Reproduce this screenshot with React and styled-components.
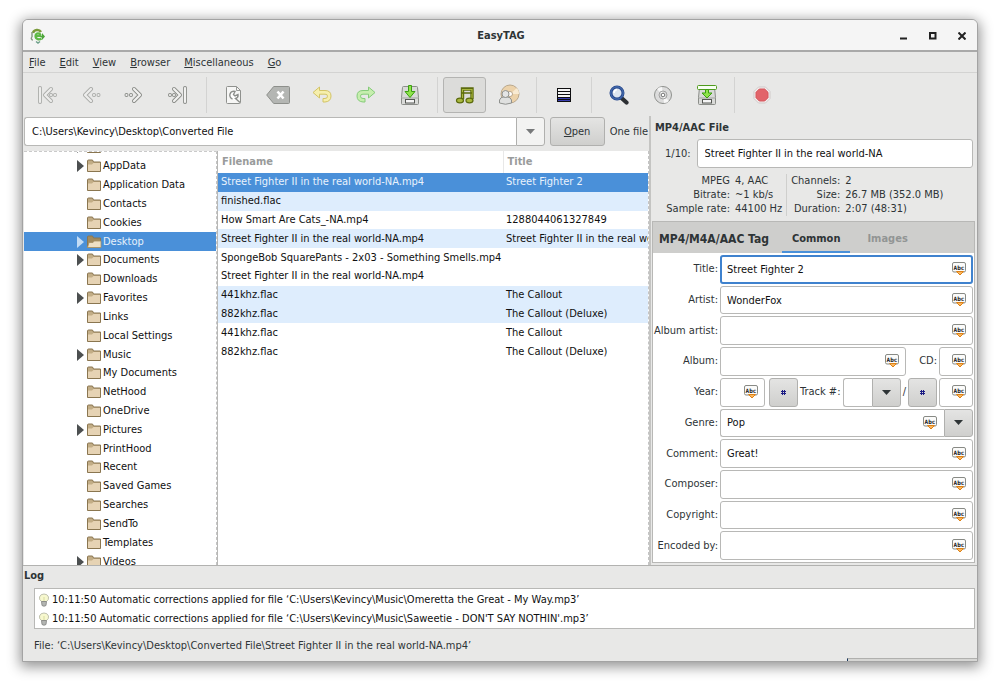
import React, { useState } from "react";
import styled, { createGlobalStyle, css } from "styled-components";

const GlobalStyle = createGlobalStyle`
  * {
    box-sizing: border-box;
  }
  body {
    margin: 0;
    background: #fff;
  }
  body, button, input {
    font-family: "DejaVu Sans Condensed", "DejaVu Sans", sans-serif;
    font-size: 11px;
    line-height: 14px;
    color: #2e3436;
  }
  button {
    padding: 0;
    border: 0;
    background: none;
  }
`;

const Desktop = styled.div`
  display: flex;
  height: 100vh;
  min-height: 640px;
  padding: 19px 22px 24px;
`;

const Window = styled.main`
  flex: 1;
  min-width: 0;
  display: flex;
  flex-direction: column;
  background: #e8e8e7;
  border: 1px solid #a3a3a3;
  border-radius: 6px 6px 0 0;
  box-shadow: 0 3px 13px 2px rgba(0, 0, 0, 0.42);
  overflow: hidden;
`;

const TitleBar = styled.header`
  flex: 0 0 32px;
  display: grid;
  grid-template-columns: 1fr auto 1fr;
  align-items: center;
  padding: 2px 5px 0 7px;
  background: #f5f5f5;
  border-bottom: 2px solid #a9a9a9;
`;

const Title = styled.h1`
  margin: 0;
  font-size: 11px;
  font-weight: bold;
`;

const WindowButtons = styled.div`
  display: flex;
  justify-content: flex-end;
  gap: 9px;
`;

const WindowButton = styled.button`
  display: flex;
  align-items: center;
  justify-content: center;
  width: 20px;
  height: 20px;
`;

const MenuBar = styled.nav`
  flex: 0 0 21px;
  display: flex;
  align-items: center;
  gap: 14px;
  padding: 1px 6px 0;
  border-bottom: 1px solid #d3d3d2;
`;

const ToolBar = styled.div`
  flex: 0 0 43px;
  display: flex;
  align-items: center;
  padding: 0 3px;
`;

const ToolGroup = styled.div`
  display: flex;
  gap: ${({ $gap }) => $gap || 1}px;
  padding: 0 6px 0 5px;
  border-right: 1px solid #d3d3d2;

  &:first-child {
    padding: 0 8px 0 0;
  }
  &:last-child {
    border-right: 0;
  }
`;

const ToolButton = styled.button`
  display: flex;
  align-items: center;
  justify-content: center;
  width: 43px;
  height: 36px;
  border: 1px solid transparent;
  border-radius: 3px;
  ${({ $pressed }) =>
    $pressed &&
    css`
      background: #dcdcda;
      border-color: #b4b4b2;
    `}
`;

const Body = styled.div`
  flex: 1;
  min-height: 0;
  display: flex;
  border-bottom: 1px solid #b2b2b0;
`;

const LeftSide = styled.div`
  flex: 1;
  min-width: 0;
  display: flex;
  flex-direction: column;
  padding-left: 1px;
`;

const AddressRow = styled.div`
  flex: none;
  display: flex;
  align-items: center;
  gap: 5px;
  padding: 1px 1px 5px 0;
  white-space: nowrap;
`;

const Combo = styled.div`
  display: flex;
  min-width: 0;
  min-height: 0;
  height: ${({ $fill }) => ($fill ? "100%" : "auto")};
  flex: ${({ $width }) => ($width ? `0 0 ${$width}px` : 1)};
`;

const Entry = styled.input`
  flex: 1;
  width: 100%;
  min-width: 0;
  height: ${({ $tall }) => ($tall ? "29px" : "100%")};
  padding: 0 ${({ $tall }) => ($tall ? 7 : 6)}px;
  color: #101010;
  background: #fff;
  border: 1px solid #b8b8b6;
  border-radius: 3px;
  outline: none;
  ${({ $joined }) =>
    $joined &&
    css`
      border-right: 0;
      border-radius: 3px 0 0 3px;
    `}
  ${({ $focused }) =>
    $focused &&
    css`
      border: 2px solid #3f82ce;
      padding: 0 5px;
    `}
`;

const PushButton = styled.button`
  display: flex;
  align-items: center;
  justify-content: center;
  flex: 0 0 ${({ $width }) => $width || 29}px;
  height: ${({ $tall }) => ($tall ? "29px" : "100%")};
  background: ${({ $flat }) => ($flat ? "#f3f3f2" : "linear-gradient(#e4e4e3, #cfcfcd)")};
  border: 1px solid #b0b0ae;
  border-radius: ${({ $joined }) => ($joined ? "0 3px 3px 0" : "3px")};
`;

const Panes = styled.div`
  flex: 1;
  min-height: 0;
  display: flex;
`;

const TreePane = styled.div`
  flex: 0 0 193px;
  display: flex;
  flex-direction: column;
  background: #fff;
  border-top: 1px dashed #cacaca;
  border-right: 1px dashed #c4c4c4;
  overflow: hidden;
`;

const Tree = styled.ul`
  flex: 1;
  display: flex;
  flex-direction: column;
  list-style: none;
  margin: -14px 0 -6px;
  padding: 0;
`;

const TreeItem = styled.li`
  flex: 1;
  min-height: 0;
  display: flex;
  align-items: center;
  gap: 1px;
  padding-left: 51px;
  white-space: nowrap;
  color: ${({ $selected }) => ($selected ? "#e6f0fb" : "#101010")};
  background: ${({ $selected }) => ($selected ? "#4a90d9" : "none")};

  svg {
    flex: none;
  }
`;

const FilePane = styled.div`
  flex: 1;
  min-width: 0;
  background: #fff;
  border-left: 1px solid #b8b8b6;
  border-right: 1px dashed #c4c4c4;
  overflow: hidden;
`;

const FileTable = styled.table`
  width: 100%;
  height: 210px;
  table-layout: fixed;
  border-collapse: collapse;
  color: #101010;
`;

const HeadCell = styled.th`
  height: 22px;
  padding: 0 4px;
  text-align: left;
  color: #999b9b;
  width: ${({ $width }) => ($width ? $width + "px" : "auto")};

  & + & {
    border-left: 1px solid #e8e8e8;
  }
`;

const FileRow = styled.tr`
  background: ${({ $tint }) => ($tint ? "#deedfd" : "#fff")};
  ${({ $selected }) =>
    $selected &&
    css`
      background: #4a90d9;
      color: #e9f2fc;
    `}
`;

const Cell = styled.td`
  height: 18px;
  padding: 0 3px;
  white-space: nowrap;
  overflow: hidden;
`;

const RightSide = styled.div`
  flex: 0 0 328px;
  display: flex;
  flex-direction: column;
  border-left: 2px solid #c4c4c2;
  padding: 0 2px 2px 1px;
`;

const Heading = styled.h2`
  margin: 0;
  padding: 5px 3px 4px;
  font-size: 11px;
  line-height: 14px;
  font-weight: bold;
`;

const NameRow = styled.div`
  display: flex;
  align-items: center;
  gap: 6px;
  padding: 0 2px 0 13px;
  label {
    flex: none;
  }
`;

const Facts = styled.div`
  display: flex;
  padding: 6px 0 5px;
`;

const FactList = styled.dl`
  display: grid;
  grid-template-columns: ${({ $keys }) => $keys}px auto;
  column-gap: 5px;
  margin: 0;
  white-space: nowrap;

  dt {
    text-align: right;
  }
  dd {
    margin: 0;
  }
  & + & {
    margin-left: 4px;
    border-left: 1px solid #cfcfcd;
  }
`;

const TagBox = styled.section`
  flex: 1;
  min-height: 0;
  display: flex;
  flex-direction: column;
  background: #fff;
  border: 1px solid #b8b8b6;
`;

const TabBar = styled.div`
  flex: 0 0 31px;
  display: flex;
  align-items: stretch;
  background: #cececc;
  font-weight: bold;
`;

const TabLabel = styled.span`
  display: flex;
  align-items: center;
  flex: none;
  padding: 2px 13px 0 6px;
  font-size: 12px;
`;

const Tab = styled.button`
  padding: 0 10px;
  margin-right: 7px;
  font-weight: bold;
  color: ${({ $active }) => ($active ? "#2e3436" : "#929594")};
  border-top: 4px solid transparent;
  border-bottom: 2px solid ${({ $active }) => ($active ? "#4a90d9" : "transparent")};
`;

const Form = styled.form`
  flex: 1;
  min-height: 0;
  display: grid;
  grid-template-columns: auto 1fr;
  grid-auto-rows: 1fr;
  gap: 2px;
  padding: 2px 1px;
`;

const FieldLabel = styled.label`
  display: flex;
  align-items: center;
  justify-content: flex-end;
  padding-left: ${({ $indent }) => $indent || 0}px;
  white-space: nowrap;
`;

const FieldRow = styled.div`
  display: flex;
  align-items: center;
  gap: 2px;
  min-width: 0;
  min-height: 0;
`;

const TagField = styled.div`
  position: relative;
  display: flex;
  height: 100%;
  min-width: 0;
  flex: ${({ $width }) => ($width ? `0 0 ${$width}px` : 1)};
`;

const YearBox = styled.div`
  display: flex;
  gap: 4px;
  height: 100%;
`;

const FillButton = styled.button`
  position: absolute;
  right: 6px;
  top: 0;
  bottom: 0;
  display: flex;
  align-items: center;
`;

const Log = styled.section`
  flex: none;
  padding: 3px 2px 0 1px;
`;

const LogTitle = styled.h2`
  margin: 0;
  font-size: 11px;
  line-height: 14px;
  font-weight: bold;
`;

const LogLines = styled.ul`
  list-style: none;
  margin: 5px 0 0 10px;
  padding: 1px 3px 0;
  color: #101010;
  background: #fff;
  border: 1px solid #b8b8b6;
`;

const LogLine = styled.li`
  display: flex;
  align-items: center;
  gap: 2px;
  height: 19px;
`;

const Footer = styled.footer`
  flex: 0 0 32px;
  display: flex;
  flex-direction: column;
  justify-content: space-between;
  padding-top: 10px;
`;

const Status = styled.div`
  padding-left: 11px;
`;

const Progress = styled.div`
  align-self: flex-end;
  width: 130px;
  height: 3px;
  background: #d6d6d4;
  border-top: 1px solid #b0b0ae;
  border-left: 1px solid #17365c;
`;

const nodes = [
  ["", true],
  ["AppData", true],
  ["Application Data"],
  ["Contacts"],
  ["Cookies"],
  ["Desktop", true],
  ["Documents", true],
  ["Downloads"],
  ["Favorites", true],
  ["Links"],
  ["Local Settings"],
  ["Music", true],
  ["My Documents"],
  ["NetHood"],
  ["OneDrive"],
  ["Pictures", true],
  ["PrintHood"],
  ["Recent"],
  ["Saved Games"],
  ["Searches"],
  ["SendTo"],
  ["Templates"],
  ["Videos", true],
];

const files = [
  { name: "Street Fighter II in the real world-NA.mp4", title: "Street Fighter 2", selected: true },
  { name: "finished.flac", title: "", tint: true },
  { name: "How Smart Are Cats_-NA.mp4", title: "1288044061327849" },
  { name: "Street Fighter II in the real world-NA.mp4", title: "Street Fighter II in the real world-NA", tint: true },
  { name: "SpongeBob SquarePants - 2x03 - Something Smells.mp4", title: "" },
  { name: "Street Fighter II in the real world-NA.mp4", title: "" },
  { name: "441khz.flac", title: "The Callout", tint: true },
  { name: "882khz.flac", title: "The Callout (Deluxe)", tint: true },
  { name: "441khz.flac", title: "The Callout" },
  { name: "882khz.flac", title: "The Callout (Deluxe)" },
];

const logLines = [
  "10:11:50 Automatic corrections applied for file ‘C:\\Users\\Kevincy\\Music\\Omeretta the Great - My Way.mp3’",
  "10:11:50 Automatic corrections applied for file ‘C:\\Users\\Kevincy\\Music\\Saweetie - DON'T SAY NOTHIN'.mp3’",
];

/* icons */

function Svg({ w = 22, h = w, children }) {
  return (
    <svg width={w} height={h} viewBox={`0 0 ${w} ${h}`} fill="none" aria-hidden="true">
      {children}
    </svg>
  );
}

function AppIcon() {
  return (
    <Svg w={16}>
      <path d="M3 5C4 1.500 9 1 11 4" stroke="#7a9a3a" strokeWidth="2.600" />
      <path d="M2 4v5M2 9c-1 1-1 3 1 3" stroke="#8a9a86" strokeWidth="1.500" />
      <path d="M5.500 8h5C10.500 4.500 5.500 4.500 5.500 8c0 3.500 4 4 6 2.500" stroke="#5fb946" strokeWidth="2.200" />
      <path d="M10 8h2V5L15 8.500 12 12v-2" fill="#4da53a" />
      <path d="M6 13.500l2 1.500 2-1.500" stroke="#6fa08c" strokeWidth="1.500" />
    </Svg>
  );
}

function Nav({ flip, bar, dim }) {
  const shape = (
    <>
      {bar && <path d="M3 4v14" />}
      <path d={bar ? "M14 5l-6 6 6 6" : "M11 5l-6 6 6 6"} />
      {!bar && <path d="M14 11h.01M18.500 11h.01" />}
      {bar && <path d="M14 11h.01M18 11h.01" />}
    </>
  );
  return (
    <Svg>
      <g transform={flip ? "translate(22 0) scale(-1 1)" : undefined} strokeLinecap="round" strokeLinejoin="round" opacity={dim ? 0.65 : 1}>
        <g stroke="#8b8d89" strokeWidth="4">{shape}</g>
        <g stroke="#f1f1f0" strokeWidth="2.200">{shape}</g>
      </g>
    </Svg>
  );
}

function ScanIcon() {
  return (
    <Svg w={20}>
      <path d="M2.500 2.500q0-1 1-1h9l4 4v12q0 1-1 1h-12q-1 0-1-1z" fill="#f6f6f5" stroke="#8f918e" />
      <path d="M12.500 1.500v4h4" stroke="#999b98" />
      <path d="M8.500 14a3.800 3.800 0 1 1 2.500-7.500l-1.500 3 1.500 1.500 3-1.500q.5 3-2.500 4l4.500 4" stroke="#8c8e8b" strokeWidth="1.400" fill="#fff" />
    </Svg>
  );
}

function ClearIcon() {
  return (
    <Svg w={24} h={20}>
      <path d="M.700 10l7-8.500h14.800q1 0 1 1v15q0 1-1 1H7.700z" fill="#b4b6b3" stroke="#8d8f8b" />
      <path d="M11.500 6.500l6 7M17.500 6.500l-6 7" stroke="#fff" strokeWidth="2.600" />
    </Svg>
  );
}

function UndoIcon({ redo }) {
  return (
    <Svg w={20}>
      <path
        transform={redo ? "translate(20 0) scale(-1 1)" : undefined}
        d="M1 7.500L7.500 2v3.500H13q6 0 6 5.500t-6 6h-2v-3.500h2q2.500 0 2.500-2.300T13 9.200H7.500V13z"
        fill={redo ? "#c6eeae" : "#f6efad"}
        stroke={redo ? "#86cc7a" : "#d3c466"}
        strokeLinejoin="round"
      />
    </Svg>
  );
}

function SaveIcon({ all }) {
  return (
    <Svg w={20} h={22}>
      <path d="M2.500 3.500q0-1 1-1h13q1 0 1 1l1 10v6q0 1-1 1h-15q-1 0-1-1v-6z" fill="#d9dad8" stroke="#8b8d89" />
      <path d="M1.500 14h17" stroke="#a2a4a0" />
      <rect x="5.500" y="15.500" width="9" height="3.500" fill="#f5f5f5" stroke="#555753" />
      {all && <rect x=".5" y="1.500" width="19" height="4" rx="1" fill="#f7fff2" stroke="#4e9a1c" />}
      <path d={all ? "M8.500 5.500h3v3.500h3.500l-5 5-5-5h3.500z" : "M8.500 1.500h3v6h3.500l-5 6-5-6h3.500z"} fill="#8ee34a" stroke="#3c9e12" />
    </Svg>
  );
}

function MusicIcon() {
  return (
    <Svg w={20}>
      <path d="M7.500 14V4h9.500v10" stroke="#5c6b0e" strokeWidth="3.400" />
      <path d="M7.500 13.500V4.500h9.500v9" stroke="#a9b83e" strokeWidth="1.200" />
      <path d="M6 8h11" stroke="#5c6b0e" strokeWidth="1.500" />
      <ellipse cx="5" cy="15.500" rx="3.500" ry="2.300" fill="#a9b83e" stroke="#5c6b0e" strokeWidth="1.200" />
      <ellipse cx="14.500" cy="15.500" rx="3.500" ry="2.300" fill="#a9b83e" stroke="#5c6b0e" strokeWidth="1.200" />
    </Svg>
  );
}

function ArtistIcon() {
  return (
    <Svg>
      <circle cx="12" cy="10" r="9" fill="#ecd2aa" stroke="#b9a78c" />
      <path d="M12 10l7-6a9 9 0 0 1 2 6zM12 10l-7 3a9 9 0 0 1 0-7z" fill="#f8ead2" />
      <circle cx="12" cy="10" r="2.500" fill="#fff" stroke="#b9a58a" />
      <path d="M1.500 19v-3q1-3 4-3h4q3 0 4 3v3q-6 2.500-12 0z" fill="#dfe0df" stroke="#8f918e" />
      <circle cx="7.500" cy="10" r="3.500" fill="#e4e5e5" stroke="#8f918e" />
    </Svg>
  );
}

function ListIcon() {
  return (
    <Svg w={14} h={14}>
      <path d="M0 0h14v14H0z" fill="#0e0e10" />
      <path d="M1 2h12M1 5h12M1 8h12" stroke="#f4f4f4" strokeWidth="2" />
      <path d="M1 10.500h12M1 12.500h12" stroke="#3b3fb0" strokeWidth="1" />
    </Svg>
  );
}

function FindIcon() {
  return (
    <Svg w={20}>
      <path d="M12.500 13l5 4.500" stroke="#2d3034" strokeWidth="4.200" strokeLinecap="round" />
      <circle cx="8" cy="8" r="6" fill="#dde5ef" stroke="#26478c" strokeWidth="3" />
      <circle cx="8" cy="8" r="6.200" stroke="#4f78b8" strokeWidth="1" />
      <path d="M5 8q0-3 3-3.500" stroke="#fff" strokeWidth="1.500" />
    </Svg>
  );
}

function DiscIcon() {
  return (
    <Svg w={20}>
      <circle cx="10" cy="10" r="8.500" fill="#dcdcdc" stroke="#8e908d" />
      <path d="M10 10L4 4a8 8 0 0 1 5-2zM10 10l6 6a8 8 0 0 1-5 2z" fill="#f7f7f7" />
      <circle cx="10" cy="10" r="4" stroke="#a2a2a2" />
      <circle cx="10" cy="10" r="1.800" fill="#fff" stroke="#777" />
    </Svg>
  );
}

function StopIcon() {
  return (
    <Svg w={18}>
      <path d="M5.500 1h7L17 5.500v7L12.500 17h-7L1 12.500v-7z" fill="#f3eeee" stroke="#cfc9c9" />
      <path d="M6.300 3h5.400L15 6.300v5.400L11.700 15H6.300L3 11.700V6.300z" fill="#e2646a" stroke="#d4565c" />
    </Svg>
  );
}

function FolderIcon({ open }) {
  return (
    <Svg w={15} h={14}>
      <path d="M.500 12.500V2q0-1 1-1h4l1 2h7v9.500z" fill={open ? "#a18a5e" : "#c2ad86"} stroke="#8a7650" />
      {open ? (
        <path d="M.500 12.500l1.500-5h4l1-1.500h7v6.500z" fill="#eedfc4" stroke="#a58f66" strokeWidth=".8" />
      ) : (
        <path d="M1 12V5.500h4L6.500 4H13v8z" fill="#e6d3b4" />
      )}
    </Svg>
  );
}

function Expander({ show, light }) {
  return (
    <Svg w={11} h={12}>
      {show && <path d="M2 0l7 6-7 6z" fill={light ? "#c3dcf5" : "#4c4f50"} />}
    </Svg>
  );
}

function Caret({ color = "#2e3436" }) {
  return (
    <Svg w={9} h={5}>
      <path d="M0 0h9L4.500 5z" fill={color} />
    </Svg>
  );
}

function AbcIcon() {
  return (
    <Svg w={15} h={14}>
      <rect x=".5" y=".5" width="13" height="9.500" rx="1.500" fill="#fbfbfa" stroke="#888a85" />
      <text x="7" y="7.500" textAnchor="middle" fontSize="6" fontWeight="bold" fontFamily="DejaVu Sans Mono, monospace" fill="#16191a">Abc</text>
      <path d="M4.500 9.500h7L8 13z" fill="#fbb65e" stroke="#dd8217" />
    </Svg>
  );
}

function HashIcon() {
  return (
    <Svg w={5}>
      <path d="M1.500 0v5M3.500 0v5M0 1.500h5M0 3.500h5" stroke="#1c1c84" strokeWidth="1" />
    </Svg>
  );
}

function BulbIcon() {
  return (
    <Svg w={12} h={14}>
      <path d="M3.500 8.500Q1 7 1.500 4 2.500 1 6 1t4.500 3q.5 3-2 4.500z" fill="#f7f8cf" stroke="#bfc1ae" />
      <path d="M3.500 8.500h5l-.5 4q-2 1.500-4 0z" fill="#b3b5b2" stroke="#80827f" strokeWidth=".8" />
      <path d="M6 4v4" stroke="#d8dba0" />
    </Svg>
  );
}

/* pieces */

function Mnemonic({ text }) {
  return (
    <span>
      <u>{text[0]}</u>
      {text.slice(1)}
    </span>
  );
}

function TextField({ id, label, initial = "", width, focused, joined }) {
  const [value, setValue] = useState(initial);
  return (
    <TagField $width={width}>
      <Entry
        id={id}
        aria-label={label}
        value={value}
        onChange={(e) => setValue(e.target.value)}
        onFocus={(e) => e.target.setSelectionRange(value.length, value.length)}
        $focused={focused}
        $joined={joined}
        autoFocus={focused}
      />
      <FillButton type="button" aria-label="Set for all selected files">
        <AbcIcon />
      </FillButton>
    </TagField>
  );
}

function Field({ id, label, ...rest }) {
  return (
    <>
      <FieldLabel htmlFor={id}>{label}:</FieldLabel>
      <TextField id={id} {...rest} />
    </>
  );
}

function TagForm() {
  return (
    <Form>
      <Field id="title" label="Title" initial="Street Fighter 2" focused />
      <Field id="artist" label="Artist" initial="WonderFox" />
      <Field id="album-artist" label="Album artist" />

      <FieldLabel htmlFor="album">Album:</FieldLabel>
      <FieldRow>
        <TextField id="album" />
        <FieldLabel htmlFor="cd" $indent={11}>CD:</FieldLabel>
        <TextField id="cd" width={34} />
      </FieldRow>

      <FieldLabel htmlFor="year">Year:</FieldLabel>
      <FieldRow>
        <YearBox>
          <TextField id="year" width={45} />
          <PushButton type="button" aria-label="Number tracks">
            <HashIcon />
          </PushButton>
        </YearBox>
        <FieldLabel htmlFor="track">Track #:</FieldLabel>
        <Combo $fill>
          <Entry id="track" defaultValue="" $joined />
          <PushButton type="button" aria-label="Track list" $joined>
            <Caret />
          </PushButton>
        </Combo>
        <span>/</span>
        <PushButton type="button" aria-label="Count tracks">
          <HashIcon />
        </PushButton>
        <TextField label="Total tracks" width={34} />
      </FieldRow>

      <FieldLabel htmlFor="genre">Genre:</FieldLabel>
      <Combo>
        <TextField id="genre" initial="Pop" joined />
        <PushButton type="button" aria-label="Genre list" $joined>
          <Caret />
        </PushButton>
      </Combo>

      <Field id="comment" label="Comment" initial="Great!" />
      <Field id="composer" label="Composer" />
      <Field id="copyright" label="Copyright" />
      <Field id="encoded-by" label="Encoded by" />
    </Form>
  );
}

const menus = ["File", "Edit", "View", "Browser", "Miscellaneous", "Go"];

export default function App() {
  return (
    <Desktop>
      <GlobalStyle />
      <Window>
        <TitleBar>
          <AppIcon />
          <Title>EasyTAG</Title>
          <WindowButtons>
            <WindowButton aria-label="Minimize">
              <Svg w={8}><path d="M0 6.500h7" stroke="#222" strokeWidth="2" /></Svg>
            </WindowButton>
            <WindowButton aria-label="Maximize">
              <Svg w={8}><path d="M1 1h5.500v5.500H1z" stroke="#222" strokeWidth="2" /></Svg>
            </WindowButton>
            <WindowButton aria-label="Close">
              <Svg w={8}><path d="M.500.500l7 7M7.500.500l-7 7" stroke="#222" strokeWidth="2" /></Svg>
            </WindowButton>
          </WindowButtons>
        </TitleBar>

        <MenuBar>
          {menus.map((m) => (
            <button key={m}><Mnemonic text={m} /></button>
          ))}
        </MenuBar>

        <ToolBar>
          <ToolGroup $gap="0">
            <ToolButton aria-label="First file"><Nav bar dim /></ToolButton>
            <ToolButton aria-label="Previous file"><Nav dim /></ToolButton>
            <ToolButton aria-label="Next file"><Nav flip /></ToolButton>
            <ToolButton aria-label="Last file"><Nav flip bar /></ToolButton>
          </ToolGroup>
          <ToolGroup>
            <ToolButton aria-label="Scan files"><ScanIcon /></ToolButton>
            <ToolButton aria-label="Remove tags"><ClearIcon /></ToolButton>
            <ToolButton aria-label="Undo"><UndoIcon /></ToolButton>
            <ToolButton aria-label="Redo"><UndoIcon redo /></ToolButton>
            <ToolButton aria-label="Save"><SaveIcon /></ToolButton>
          </ToolGroup>
          <ToolGroup>
            <ToolButton aria-label="Show files" $pressed><MusicIcon /></ToolButton>
            <ToolButton aria-label="Show artists"><ArtistIcon /></ToolButton>
          </ToolGroup>
          <ToolGroup>
            <ToolButton aria-label="Invert selection"><ListIcon /></ToolButton>
          </ToolGroup>
          <ToolGroup>
            <ToolButton aria-label="Find"><FindIcon /></ToolButton>
            <ToolButton aria-label="CDDB search"><DiscIcon /></ToolButton>
            <ToolButton aria-label="Write playlist"><SaveIcon all /></ToolButton>
          </ToolGroup>
          <ToolGroup>
            <ToolButton aria-label="Stop"><StopIcon /></ToolButton>
          </ToolGroup>
        </ToolBar>

        <Body>
          <LeftSide>
            <AddressRow>
              <Combo>
                <Entry aria-label="Directory" defaultValue="C:\Users\Kevincy\Desktop\Converted File" $joined $tall />
                <PushButton aria-label="Recent directories" $joined $flat $tall>
                  <Caret color="#77797a" />
                </PushButton>
              </Combo>
              <PushButton $width={55} $tall><Mnemonic text="Open" /></PushButton>
              <span>One file</span>
            </AddressRow>
            <Panes>
              <TreePane>
                <Tree>
                  {nodes.map(([name, parent]) => {
                    const selected = name === "Desktop";
                    return (
                      <TreeItem key={name} $selected={selected}>
                        <Expander show={parent} light={selected} />
                        <FolderIcon open={selected} />
                        {name}
                      </TreeItem>
                    );
                  })}
                </Tree>
              </TreePane>
              <FilePane>
                <FileTable>
                  <thead>
                    <tr>
                      <HeadCell>Filename</HeadCell>
                      <HeadCell $width={145}>Title</HeadCell>
                    </tr>
                  </thead>
                  <tbody>
                    {files.map((f, i) => (
                      <FileRow key={i} $tint={f.tint} $selected={f.selected}>
                        <Cell>{f.name}</Cell>
                        <Cell>{f.title}</Cell>
                      </FileRow>
                    ))}
                  </tbody>
                </FileTable>
              </FilePane>
            </Panes>
          </LeftSide>

          <RightSide>
            <Heading>MP4/AAC File</Heading>
            <NameRow>
              <label htmlFor="filename">1/10:</label>
              <Entry id="filename" defaultValue="Street Fighter II in the real world-NA" $tall />
            </NameRow>
            <Facts>
              <FactList $keys={78}>
                <dt>MPEG</dt>
                <dd>4, AAC</dd>
                <dt>Bitrate:</dt>
                <dd>~1 kb/s</dd>
                <dt>Sample rate:</dt>
                <dd>44100 Hz</dd>
              </FactList>
              <FactList $keys={53}>
                <dt>Channels:</dt>
                <dd>2</dd>
                <dt>Size:</dt>
                <dd>26.7 MB (352.0 MB)</dd>
                <dt>Duration:</dt>
                <dd>2:07 (48:31)</dd>
              </FactList>
            </Facts>
            <TagBox>
              <TabBar>
                <TabLabel>MP4/M4A/AAC Tag</TabLabel>
                <Tab $active>Common</Tab>
                <Tab>Images</Tab>
              </TabBar>
              <TagForm />
            </TagBox>
          </RightSide>
        </Body>

        <Log>
          <LogTitle>Log</LogTitle>
          <LogLines>
            {logLines.map((line) => (
              <LogLine key={line}>
                <BulbIcon />
                {line}
              </LogLine>
            ))}
          </LogLines>
        </Log>
        <Footer>
          <Status>File: ‘C:\Users\Kevincy\Desktop\Converted File\Street Fighter II in the real world-NA.mp4’</Status>
          <Progress />
        </Footer>
      </Window>
    </Desktop>
  );
}
